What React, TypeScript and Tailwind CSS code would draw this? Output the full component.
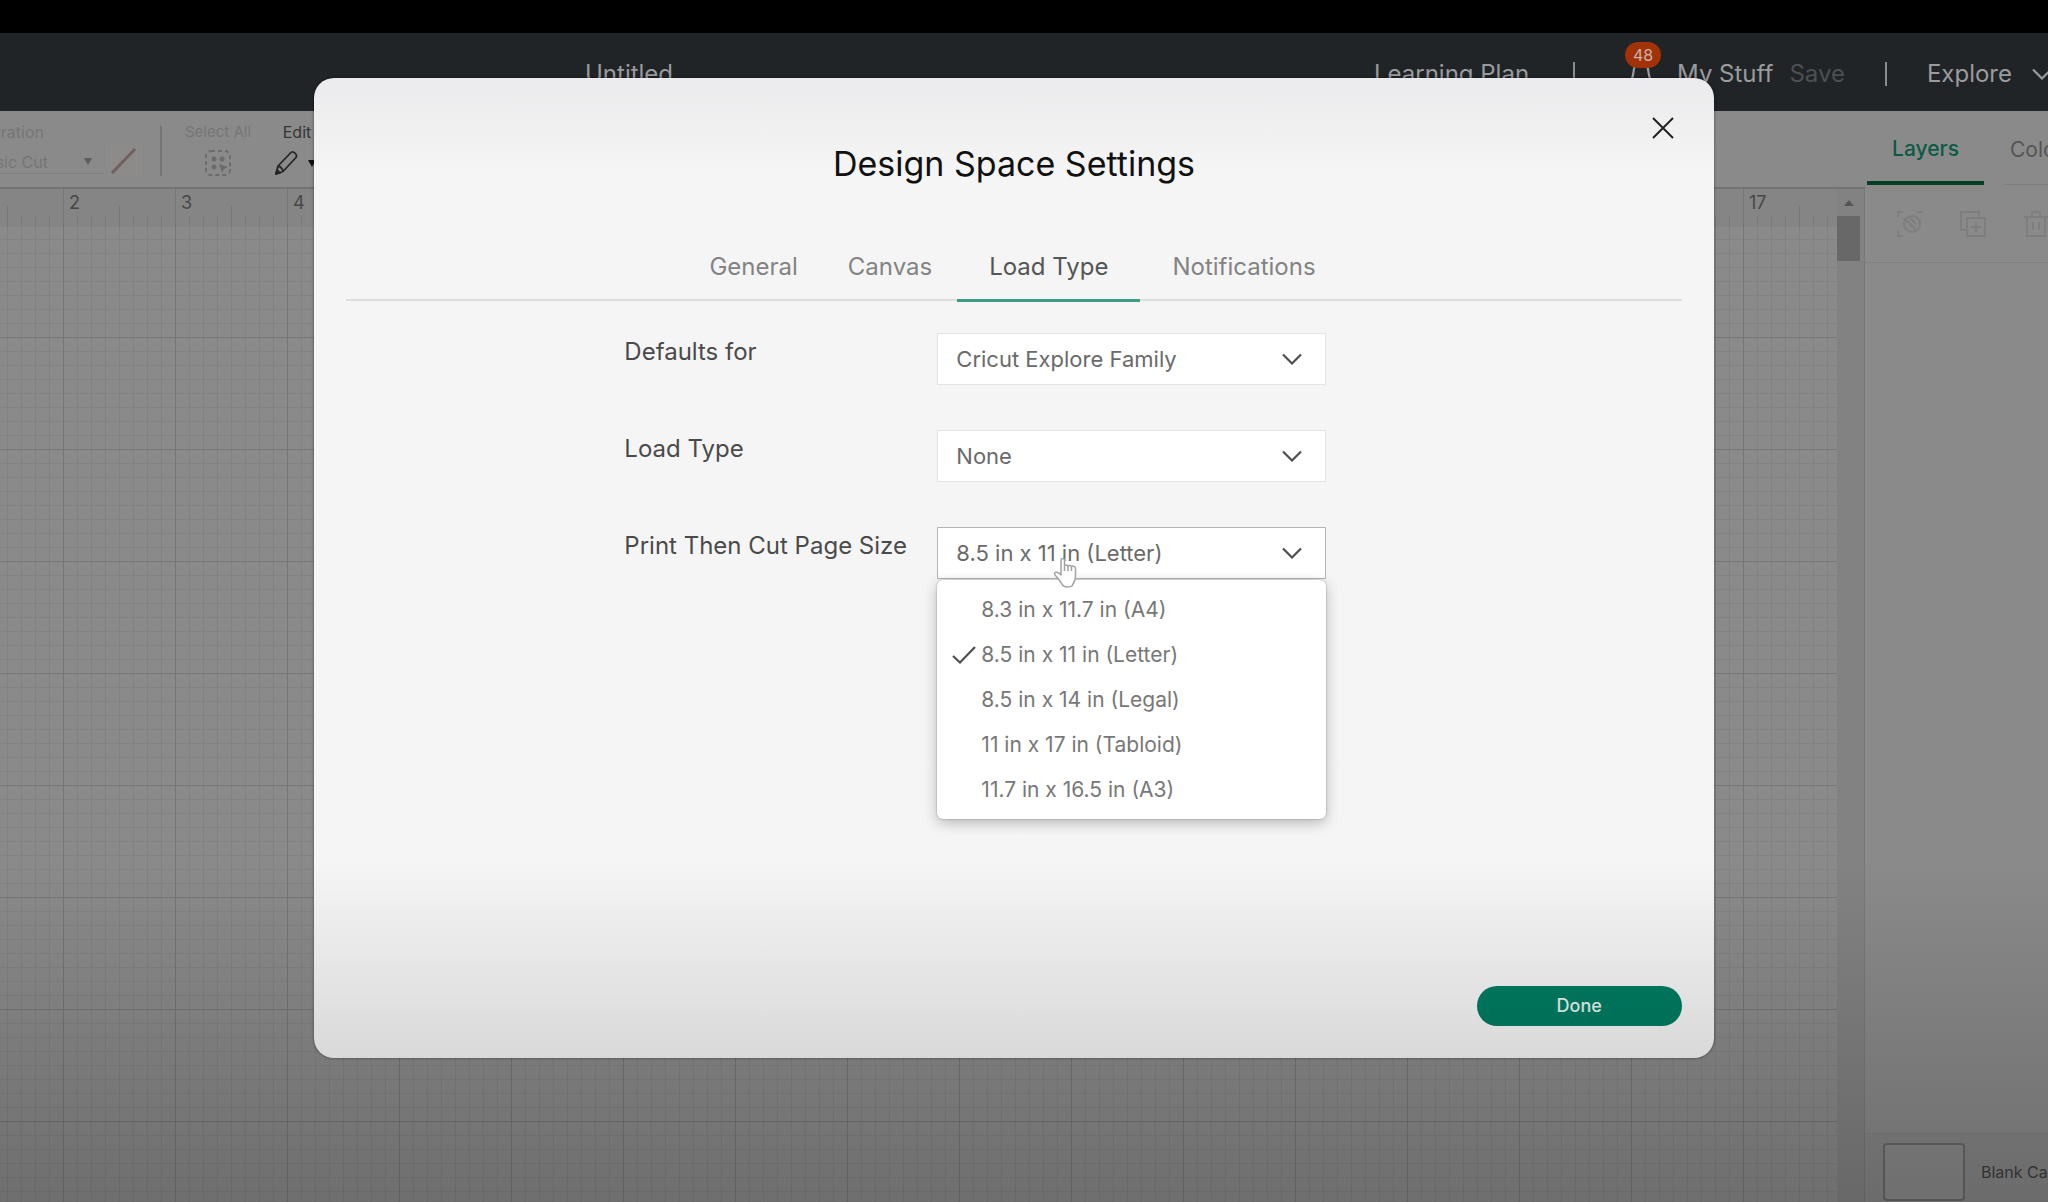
import { useState } from 'react';
import type { ReactNode } from 'react';

const PAGE_SIZES = [
  '8.3 in x 11.7 in (A4)',
  '8.5 in x 11 in (Letter)',
  '8.5 in x 14 in (Legal)',
  '11 in x 17 in (Tabloid)',
  '11.7 in x 16.5 in (A3)',
];

const RULER_MARKS = Array.from({ length: 16 }, (_, i) => i + 2);

function ChevronDown({ className }: { className: string }) {
  return (
    <svg viewBox="0 0 20 12" fill="none" stroke="currentColor" strokeWidth="2.2" className={className} aria-hidden="true">
      <path d="M1 1.5 10 10.5 19 1.5" />
    </svg>
  );
}

function HeaderBar() {
  return (
    <header className="flex h-[78px] shrink-0 items-center overflow-hidden bg-[#202427] pt-1 text-2xl text-[#9a9b9d]">
      <h1 className="ml-[585px] shrink-0">Untitled</h1>
      <nav className="ml-auto flex shrink-0 items-center" aria-label="Main">
        <a href="#learning" className="mr-11">Learning Plan</a>
        <span className="mr-[50px] h-6 w-0.5 bg-[#8b8c8e]" />
        <button type="button" aria-label="Notifications" className="relative mr-5 h-10 w-8">
          <svg viewBox="0 0 32 40" fill="none" stroke="currentColor" strokeWidth="2.2" className="h-10 w-8">
            <path d="M4 29c3-3 4-6 4.500-11C9 12 12 9 16 9s7 3 7.500 9c.5 5 1.500 8 4.500 11zM12 33c1 2.500 7 2.500 8 0" />
          </svg>
          <span className="absolute -top-3 left-0 flex h-[26px] w-9 items-center justify-center rounded-full bg-[#a23208] text-base text-[#c9b3aa]">
            48
          </span>
        </button>
        <a href="#stuff" className="mr-4">My Stuff</a>
        <button type="button" className="mr-10 text-[#4c5053]">Save</button>
        <span className="mr-10 h-6 w-0.5 bg-[#8b8c8e]" />
        <button type="button" className="flex items-center gap-5">
          Explore
          <ChevronDown className="-mr-1 h-3 w-5" />
        </button>
      </nav>
    </header>
  );
}

function Toolbar() {
  return (
    <div className="flex h-[78px] items-start overflow-hidden border-b-2 border-[#737373] bg-[#8a8a8a] pt-[11px] text-base leading-5 text-[#767676]">
      <div className="flex w-[104px] shrink-0 flex-col gap-2 overflow-hidden">
        <div className="flex w-11 justify-end"><span>Operation</span></div>
        <div className="flex h-6 items-center border-b border-[#808080]">
          <span className="flex w-12 shrink-0 justify-end whitespace-nowrap">Basic Cut</span>
          <svg viewBox="0 0 8 7" className="ml-9 h-[7px] w-2" fill="#5f5f5f"><path d="M0 0h8L4 7z" /></svg>
        </div>
      </div>
      <svg viewBox="0 0 32 32" className="mt-6 ml-1 h-8 w-8 shrink-0" aria-hidden="true">
        <rect width="32" height="32" fill="#8d8a8a" />
        <path d="M4 27 27 3" stroke="#70605f" strokeWidth="3" />
      </svg>
      <span className="mt-1 ml-5 h-[50px] w-0.5 shrink-0 bg-[#747474]" />
      <button type="button" className="ml-5 flex w-[72px] shrink-0 flex-col items-center gap-2 text-[15px] leading-5 whitespace-nowrap">
        Select All
        <svg viewBox="0 0 26 26" className="h-[26px] w-[26px]" fill="none" stroke="#6c6c6c" strokeWidth="2">
          <rect x="1" y="1" width="24" height="24" rx="5" strokeDasharray="4 3" />
          <g fill="#6c6c6c" stroke="none">
            <circle cx="9" cy="9" r="2.500" /><circle cx="17" cy="9" r="2.500" /><circle cx="9" cy="17" r="2.500" />
            <path d="m14 14 9 3-4 2-2 4z" />
          </g>
        </svg>
      </button>
      <button type="button" className="ml-6 flex shrink-0 flex-col gap-2 text-[#363636]">
        Edit
        <span className="-ml-1 flex items-center gap-2">
          <svg viewBox="0 0 26 26" className="h-[26px] w-[26px]" fill="none" stroke="#262626" strokeWidth="1.800" strokeLinejoin="round">
            <path d="M2 24 4 16 17 2.500c2-2 7 2 5 5L9 21.500zM4 16c2 0 5 3 5 5.500" />
            <path d="m2 24 1-4 3 3z" fill="#222" />
          </svg>
          <svg viewBox="0 0 8 7" className="h-[7px] w-2" fill="#111"><path d="M0 0h8L4 7z" /></svg>
        </span>
      </button>
    </div>
  );
}

function Workspace() {
  return (
    <div className="flex min-h-0 flex-1">
      <div className="relative flex min-w-0 flex-1 flex-col overflow-hidden bg-[#8a8a8a]">
        <div className="relative h-[38px] shrink-0 overflow-hidden bg-[#858585]">
          <svg className="absolute inset-0 h-full w-full" aria-hidden="true">
            <defs>
              <pattern id="ticks" x="63" width="112" height="39" patternUnits="userSpaceOnUse">
                <path d="M.5 0v39" stroke="#757575" />
                <path d="M56.500 17v22" stroke="#777777" />
                <path d="M14.500 27v12M28.500 27v12M42.500 27v12M70.500 27v12M84.500 27v12M98.500 27v12" stroke="#7b7b7b" />
              </pattern>
            </defs>
            <rect width="100%" height="100%" fill="url(#ticks)" />
          </svg>
          <div className="relative flex pl-[63px] text-lg leading-7 text-[#484848]">
            {RULER_MARKS.map((n) => (
              <span key={n} className="w-28 shrink-0 pl-1.5">{n}</span>
            ))}
          </div>
        </div>
        <svg className="min-h-0 w-full flex-1" aria-hidden="true">
          <defs>
            <pattern id="grid" x="63" y="-2" width="112" height="112" patternUnits="userSpaceOnUse">
              <path
                d="M14.500 0v112M28.500 0v112M42.500 0v112M56.500 0v112M70.500 0v112M84.500 0v112M98.500 0v112M0 14.500h112M0 28.500h112M0 42.500h112M0 56.500h112M0 70.500h112M0 84.500h112M0 98.500h112"
                stroke="#828282"
              />
              <path d="M.5 0v112M0 .5h112" stroke="#767676" />
            </pattern>
          </defs>
          <rect width="100%" height="100%" fill="url(#grid)" />
        </svg>
      </div>
      <div className="flex w-7 shrink-0 flex-col border-r border-[#787878] bg-[#828282]">
        <svg viewBox="0 0 10 6" className="mt-[11px] ml-[7px] h-1.5 w-2.5" fill="#555"><path d="M5 0l5 6H0z" /></svg>
        <div className="mt-2.5 h-[45px] w-[23px] bg-[#686868]" />
      </div>
    </div>
  );
}

function LayerAction({ label, children }: { label: string; children: ReactNode }) {
  return (
    <button type="button" aria-label={label} className="shrink-0">
      <svg viewBox="0 0 28 28" className="h-7 w-7" fill="none" stroke="#7e7e7e" strokeWidth="2">{children}</svg>
    </button>
  );
}

function LayersPanel() {
  return (
    <aside className="flex w-[183px] shrink-0 flex-col overflow-hidden bg-[#8a8a8a]">
      <div className="flex h-[74px] shrink-0 gap-5 pl-0.5 text-[21px]">
        <button type="button" className="w-[117px] shrink-0 border-b-4 border-[#073f25] pt-1.5 font-medium text-[#0d5b45]">Layers</button>
        <button type="button" className="shrink-0 border-b border-[#7d7d7d] px-1.5 pt-1 whitespace-nowrap text-[#555]">Color Sync</button>
      </div>
      <div className="flex h-[78px] shrink-0 items-center gap-[35px] border-b border-[#808080] pl-[31px]">
        <LayerAction label="Group">
          <path d="M2 7V2h5M2 21v5h5M21 2h5" />
          <circle cx="16" cy="14" r="8" />
          <path d="m8 8 12 12M14 8l6 6" />
        </LayerAction>
        <LayerAction label="Duplicate">
          <path d="M8 20H2V2h18v6" />
          <rect x="8" y="8" width="18" height="18" />
          <path d="M17 12v10M12 17h10" />
        </LayerAction>
        <LayerAction label="Delete">
          <path d="M2 7h24M10 7V2h8v5M5 7v19h18V7M11 12v8M17 12v8" />
        </LayerAction>
      </div>
      <div className="mt-auto flex h-[69px] shrink-0 items-start gap-4 border-t border-[#808080] bg-[#868686] pt-[9px] pl-[18px] text-base whitespace-nowrap text-[#3d3d3d]">
        <span className="h-[58px] w-[82px] shrink-0 rounded-sm border-2 border-[#686868] bg-[#8a8a8a]" />
        <span className="leading-[58px]">Blank Canvas</span>
      </div>
    </aside>
  );
}

const TABS = [
  { name: 'General', style: 'px-[25px] text-[#838383]' },
  { name: 'Canvas', style: 'px-[25px] text-[#838383]' },
  { name: 'Load Type', style: 'px-8 text-[#555] after:absolute after:inset-x-0 after:top-full after:h-[3px] after:bg-[#3f9b83]' },
  { name: 'Notifications', style: 'pr-7 pl-8 text-[#838383]' },
];

interface FieldProps {
  id: string;
  label: string;
  value: string;
  options: string[];
  border: string;
  onChange: (value: string) => void;
  children?: ReactNode;
}

function Field({ id, label, value, options, border, onChange, children }: FieldProps) {
  return (
    <div className="flex">
      <label htmlFor={id} className="w-[313px] shrink-0 pt-[3px] text-2xl text-[#4a4a4a]">{label}</label>
      <div className={`relative w-[389px] shrink-0 text-[22px] text-[#6a6a6a] ${border}`}>
        <select
          id={id}
          value={value}
          onChange={(e) => onChange(e.target.value)}
          className="h-[52px] w-full appearance-none border border-inherit bg-white pr-14 pl-[18px]"
        >
          {options.map((o) => <option key={o}>{o}</option>)}
        </select>
        <ChevronDown className="pointer-events-none absolute top-5 right-6 h-3 w-5 text-[#505050]" />
        {children}
      </div>
    </div>
  );
}

function SettingsDialog() {
  const [machine, setMachine] = useState('Cricut Explore Family');
  const [load, setLoad] = useState('None');
  const [size, setSize] = useState(PAGE_SIZES[1]);

  return (
    <section
      role="dialog"
      aria-modal="true"
      aria-labelledby="settings-title"
      className="relative flex w-[69%] flex-col rounded-[20px] bg-[#f5f5f5] bg-linear-to-b from-[#ebebed] to-[#f5f5f5] to-10% px-8 pb-8 shadow-[0_0_3px_rgba(0,0,0,0.5)]"
    >
      <button type="button" aria-label="Close" className="absolute top-[39px] right-10 p-0 text-[#222]">
        <svg viewBox="0 0 22 22" className="h-[22px] w-[22px]" stroke="currentColor" strokeWidth="2"><path d="m1 1 20 20M21 1 1 21" /></svg>
      </button>
      <h2 id="settings-title" className="pt-[66px] text-center text-[34px] leading-10 text-[#111]">Design Space Settings</h2>
      <div role="tablist" className="mt-[46px] flex h-[71px] justify-center border-b-2 border-[#dedede] text-2xl">
        {TABS.map((t) => (
          <button key={t.name} type="button" role="tab" aria-selected={t.name === 'Load Type'} className={`relative pt-1 ${t.style}`}>
            {t.name}
          </button>
        ))}
      </div>
      <form className="mt-8 ml-[278px] flex flex-col gap-[45px]" onSubmit={(e) => e.preventDefault()}>
        <Field id="machine" label="Defaults for" value={machine} onChange={setMachine} options={['Cricut Explore Family', 'Cricut Maker Family']} border="border-[#e4e4e4]" />
        <Field id="load" label="Load Type" value={load} onChange={setLoad} options={['None', 'Single', 'Multiple']} border="border-[#e4e4e4]" />
        <Field id="size" label="Print Then Cut Page Size" value={size} onChange={setSize} options={PAGE_SIZES} border="border-[#b5b5b5]">
          <ul role="listbox" aria-label="Page sizes" className="absolute top-[53px] left-0 w-full rounded-md bg-white py-[7px] text-[21px] shadow-[0_4px_14px_rgba(0,0,0,0.25),0_0_2px_rgba(0,0,0,0.35)]">
            {PAGE_SIZES.map((s) => (
              <li key={s} role="option" aria-selected={s === size}>
                <button type="button" onClick={() => setSize(s)} className="flex h-[45px] w-full items-center pl-[15px] text-[#777]">
                  <span className="w-[29px]">
                    {s === size && (
                      <svg viewBox="0 0 24 18" className="h-[18px] w-6" fill="none" stroke="#505050" strokeWidth="2.2"><path d="m1 10 7 6.500L23 1" /></svg>
                    )}
                  </span>
                  {s}
                </button>
              </li>
            ))}
          </ul>
          <svg viewBox="0 0 26 32" className="pointer-events-none absolute top-[30px] left-[116px] h-8 w-[26px]" fill="white" stroke="#a3a3a3" strokeWidth="1.5" strokeLinejoin="round" aria-hidden="true">
            <path d="M8 16V3c0-2 3.500-2 3.500 0v6c0-1.500 3.500-1.500 3.500.5 0-1.500 3.500-1.500 3.500.5 0-1.500 4-1 4 1v8c0 4-1 6-3 9 0 2-8 3-10 0-2-4-7-9-8-11 0-3 4-2 6.500 1z" />
            <path d="M11.500 9v5M15 9.500V14M18.500 10v4" />
          </svg>
        </Field>
      </form>
      <button type="button" className="mt-auto h-10 w-[205px] self-end rounded-full bg-[#007c62] text-lg font-medium text-[#e4f3ef]">Done</button>
    </section>
  );
}

export default function App() {
  return (
    <div className="relative flex h-screen flex-col overflow-hidden bg-black pt-[33px] font-[Inter,sans-serif]">
      <HeaderBar />
      <div className="flex min-h-0 flex-1">
        <main className="flex min-w-0 flex-1 flex-col">
          <Toolbar />
          <Workspace />
        </main>
        <LayersPanel />
      </div>
      <div className="absolute inset-0 flex justify-center pt-[78px] pr-5 pb-36">
        <SettingsDialog />
      </div>
      <div className="pointer-events-none absolute inset-x-0 bottom-0 h-[340px] bg-linear-to-b from-transparent to-black/20" />
    </div>
  );
}
